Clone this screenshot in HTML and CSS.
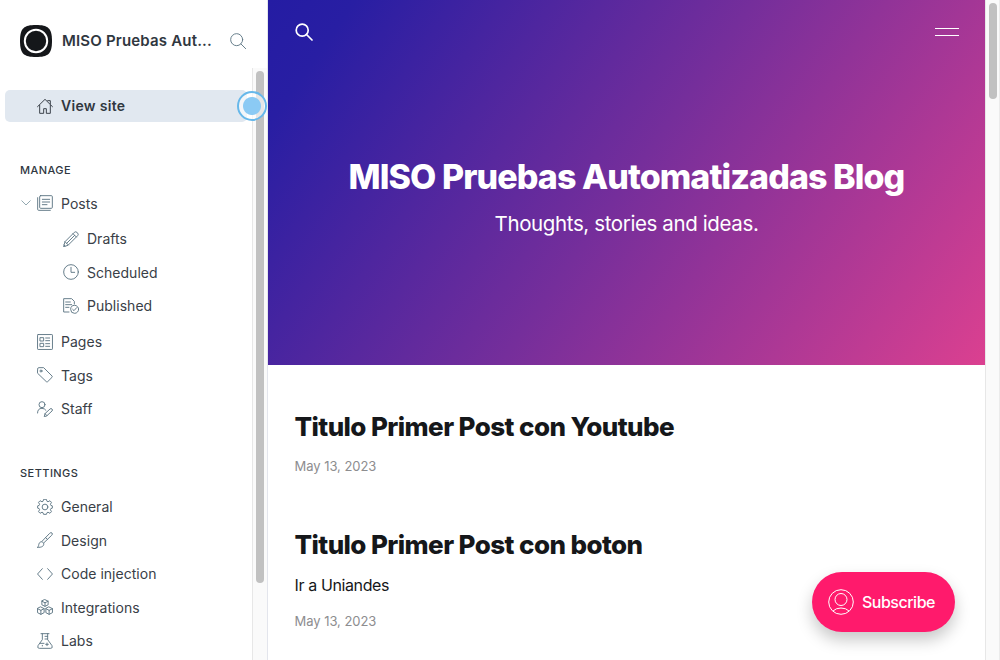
FILE: index.html
```html
<!DOCTYPE html>
<html lang="en">
<head>
<meta charset="utf-8">
<title>MISO Pruebas Automatizadas Blog</title>
<link rel="stylesheet" href="styles.css">
</head>
<body>
<div class="app">
  <aside class="sidebar">
    <header class="site">
      <svg class="site-logo" viewBox="0 0 32 32"><path d="M16 0C28 0 32 3 32 16S28 32 16 32 0 29 0 16 4 0 16 0z" fill="#15171a"/><circle cx="16" cy="16" r="11.2" fill="none" stroke="#fff" stroke-width="2"/></svg>
      <span class="site-name">MISO Pruebas Aut...</span>
      <svg class="icon search" viewBox="0 0 24 24"><circle cx="10" cy="10" r="9"/><path d="M16.5 16.5l7 7"/></svg>
    </header>
    <div class="nav-wrap">
      <nav class="nav">
        <a class="row active"><svg class="icon" viewBox="0 0 24 24"><path d="M.8 13L12 2l11.200 11M4 11v12h6v-7h4v7h6V11M16 4h4v5"/></svg><span>View site</span></a>
        <h2 class="heading manage">Manage</h2>
        <a class="row"><svg class="caret" viewBox="0 0 10 6"><path d="M.5.5L5 5 9.500.5"/></svg><svg class="icon" viewBox="0 0 24 24"><rect x="4" y="1" width="19" height="19" rx="1.500"/><path d="M1 4v17.500q0 1.500 1.500 1.500H20M8 6.500h11M8 10.500h11M8 14.500h7"/></svg><span>Posts</span></a>
        <div class="sub">
          <a class="row"><svg class="icon" viewBox="0 0 24 24"><path d="M1 23l2-7L17 2q2-2 4.500.5T22 7L8 21zM3 16l5 5M15 4l5 5M17.500 6.500l-12 12M1.500 21l1.500 1.500"/></svg><span>Drafts</span></a>
          <a class="row"><svg class="icon" viewBox="0 0 24 24"><circle cx="12" cy="12" r="11"/><path d="M12 5v7.500h5.500"/></svg><span>Scheduled</span></a>
          <a class="row"><svg class="icon" viewBox="0 0 24 24"><path d="M9 21H1V1h12l4 4v4M4 6h7M4 10h9M4 14h5"/><circle cx="17.500" cy="17" r="6"/><path d="M14.500 17l2 2 4-4.500"/></svg><span>Published</span></a>
        </div>
        <a class="row"><svg class="icon" viewBox="0 0 24 24"><rect x=".8" y=".8" width="22.400" height="22.400" rx="1"/><path d="M5 5.500h5v5H5zM5 14h5v5H5zM13 6h6M13 10h6M13 14.500h6M13 18.500h6"/></svg><span>Pages</span></a>
        <a class="row"><svg class="icon" viewBox="0 0 24 24"><path d="M1 2.500Q1 1 2.500 1H10l12.500 12.500q1 1 0 2L16 22q-1 1-2 0L1 9.500z"/><circle cx="6" cy="6" r="1.500"/></svg><span>Tags</span></a>
        <a class="row"><svg class="icon" viewBox="0 0 24 24"><circle cx="7.500" cy="5.500" r="4.500"/><path d="M.8 18q0-7 6.700-7 4 0 6 3M11 23l1-4 7.500-7q1.500-1.500 3 0t0 3L15 22zM12 19l3 3"/></svg><span>Staff</span></a>
        <h2 class="heading settings">Settings</h2>
        <a class="row"><svg class="icon" viewBox="0 0 24 24"><circle cx="12" cy="12" r="4.300"/><path d="M9.800 1 L9 3.500 L7.500 4.200 L4.600 2.600 L2.300 5 L3.900 8 L3.300 9.500 L1 10.300 V13.700 L3.300 14.500 L3.900 16 L2.300 19 L4.600 21.400 L7.500 19.800 L9 20.500 L9.800 23 H14.200 L15 20.500 L16.500 19.800 L19.400 21.400 L21.700 19 L20.100 16 L20.700 14.500 L23 13.700 V10.300 L20.700 9.500 L20.100 8 L21.700 5 L19.400 2.600 L16.500 4.200 L15 3.500 L14.200 1z"/></svg><span>General</span></a>
        <a class="row"><svg class="icon" viewBox="0 0 24 24"><path d="M1 23c2-1 1-4 2.500-6.500 2-3 5.500-2 6.500.5 1 4-3 6.500-9 6zM7.500 14L19 2q2-2 3.500-.500T22 5L10 16.500M13 8.500l2.500 2.500"/></svg><span>Design</span></a>
        <a class="row"><svg class="icon" viewBox="0 0 24 24"><path d="M8 4L.8 12 8 20M16 4l7.200 8L16 20"/></svg><span>Code injection</span></a>
        <a class="row"><svg class="icon" viewBox="0 0 24 24"><path d="M12 1l4.700 2.300v5.400L12 11 7.300 8.700V3.300zM7.300 3.300L12 5.700l4.700-2.400M12 5.700V11M5.800 12l4.900 2.500v6L5.800 23l-5-2.500v-6zM.8 14.500l5 2.500 4.900-2.500M5.800 17v6M18.200 12l5 2.500v6l-5 2.500-4.900-2.500v-6zM13.300 14.500l4.900 2.500 5-2.500M18.200 17v6"/></svg><span>Integrations</span></a>
        <a class="row"><svg class="icon" viewBox="0 0 24 24"><path d="M6 1h12M8 1v9L1.500 19Q0 23 3.500 23h17q3.500 0 2-4L16 10V1M12 5h4M12 9h4M4.500 15.500h6M15 15v4M13 17h4M8 18.500v1"/></svg><span>Labs</span></a>
      </nav>
      <div class="scrollbar nav-scroll"><div class="thumb"></div></div>
    </div>
    <div class="pointer"></div>
  </aside>
  <main class="blog">
    <section class="hero">
      <div class="topbar">
        <svg class="hero-search" viewBox="0 0 18 18"><circle cx="7.200" cy="7.200" r="6"/><path d="M11.500 11.500l5.500 5.500"/></svg>
        <div class="burger"></div>
      </div>
      <h1 class="title">MISO Pruebas Automatizadas Blog</h1>
      <p class="tagline">Thoughts, stories and ideas.</p>
    </section>
    <section class="feed">
      <article class="post"><h2 class="post-title">Titulo Primer Post con Youtube</h2><time class="date">May 13, 2023</time></article>
      <article class="post"><h2 class="post-title">Titulo Primer Post con boton</h2><p class="excerpt">Ir a Uniandes</p><time class="date">May 13, 2023</time></article>
    </section>
    <button class="subscribe"><svg class="avatar" viewBox="0 0 26 26"><circle cx="13" cy="13" r="12.300"/><circle cx="13" cy="10.500" r="6"/><path d="M5 22q3-3 8-3t8 3"/></svg><span>Subscribe</span></button>
  </main>
  <div class="scrollbar page-scroll"><div class="thumb"></div></div>
</div>
</body>
</html>
```
FILE: styles.css
```css
* { box-sizing: border-box; margin: 0; padding: 0; }
body { width: 1000px; height: 660px; overflow: hidden; background: #fff; font-family: Inter, "Liberation Sans", sans-serif; }
.app { display: flex; height: 660px; }
.sidebar { position: relative; display: flex; flex-direction: column; width: 268px; border-right: 1px solid #e3e5ec; }
.site { display: flex; align-items: center; height: 68px; padding: 14px 21px 0 20px; }
.site-logo { width: 32px; height: 32px; }
.site-name { margin-left: 10px; flex: 1; white-space: nowrap; font-size: 15px; font-weight: 600; line-height: 20px; letter-spacing: .18px; color: #30373f; }
.icon { flex: none; width: 16px; height: 16px; fill: none; stroke: #5d7583; stroke-width: 1.4; stroke-linejoin: round; stroke-linecap: round; }
.nav-wrap { display: flex; flex: 1; min-height: 0; }
.nav { flex: 1; padding: 22px 5px 0; overflow: hidden; }
.row { display: flex; align-items: center; height: 33.5px; padding-left: 32px; font-size: 14px; letter-spacing: .02px; color: #394047; white-space: nowrap; }
.row .icon { margin-right: 8px; }
.active { height: 32px; padding-bottom: 1px; border-radius: 5px; background: #e1e8f0; font-weight: 600; color: #30373f; letter-spacing: .3px; }
.active .icon { stroke: #30373f; }
.caret { width: 10px; height: 6px; margin: 0 6px 0 -16px; fill: none; stroke: #94a9b1; }
.sub { margin: 2px 0 2.4px; padding-left: 26px; }
.heading { margin-left: 15px; font-size: 11px; font-weight: 500; line-height: 14px; letter-spacing: .45px; text-transform: uppercase; color: #30373f; }
.manage { margin-top: 41px; margin-bottom: 9.6px; }
.settings { margin-top: 40.4px; margin-bottom: 10px; }
.scrollbar { flex: none; width: 15px; background: #fafafa; border-left: 1px solid #e7e7e7; padding: 3px 3px 0; }
.thumb { width: 8px; border-radius: 4px; background: #c1c1c1; }
.nav-scroll .thumb { height: 512px; }
.page-scroll { border-right: 1px solid #ebebeb; }
.page-scroll .thumb { height: 96px; }
.pointer { position: absolute; left: 237px; top: 91px; width: 30px; height: 30px; border: 2px solid #67b8ea; border-radius: 50%; background: radial-gradient(circle, #8bcaf4 0 8.5px, rgba(255,255,255,.6) 9.5px); }
.blog { position: relative; flex: 1; }
.hero { height: 365px; background: linear-gradient(125deg, #241ca3 0%, #281ea3 9%, #752e9b 50%, #db4090 100%); color: #fff; text-align: center; }
.topbar { display: flex; align-items: center; justify-content: space-between; height: 64px; padding: 0 26px 0 27px; }
.hero-search { width: 18px; height: 18px; fill: none; stroke: #fff; stroke-width: 1.7; stroke-linecap: round; }
.burger { width: 24px; height: 8px; border-top: 1px solid #fff; border-bottom: 1px solid #fff; }
.title { padding-top: 92px; font-size: 34px; line-height: 42px; font-weight: 800; letter-spacing: -.92px; white-space: nowrap; }
.tagline { margin-top: 11px; font-size: 20.5px; line-height: 30px; font-weight: 400; letter-spacing: -.38px; }
.feed { padding: 45px 26.5px; color: #15171a; }
.post { height: 118px; }
.post-title { font-size: 26px; line-height: 34px; font-weight: 800; letter-spacing: -.58px; white-space: nowrap; }
.date { display: block; margin-top: 12px; font-size: 13px; line-height: 20px; letter-spacing: -.04px; color: #8d8d8f; }
.excerpt { margin-top: 11px; margin-bottom: 14px; font-size: 16px; line-height: 24px; letter-spacing: -.38px; }
.subscribe { position: absolute; left: 544px; top: 572px; display: flex; align-items: center; width: 143px; height: 60px; padding-left: 16px; gap: 8px; border: 0; border-radius: 30px; background: #ff1a6c; color: #fff; font: 500 16px Inter, sans-serif; letter-spacing: -.5px; box-shadow: 0 8px 16px rgba(0,0,0,.22); }
.avatar { width: 26px; height: 26px; fill: none; stroke: #fff; stroke-width: 1; }
```
